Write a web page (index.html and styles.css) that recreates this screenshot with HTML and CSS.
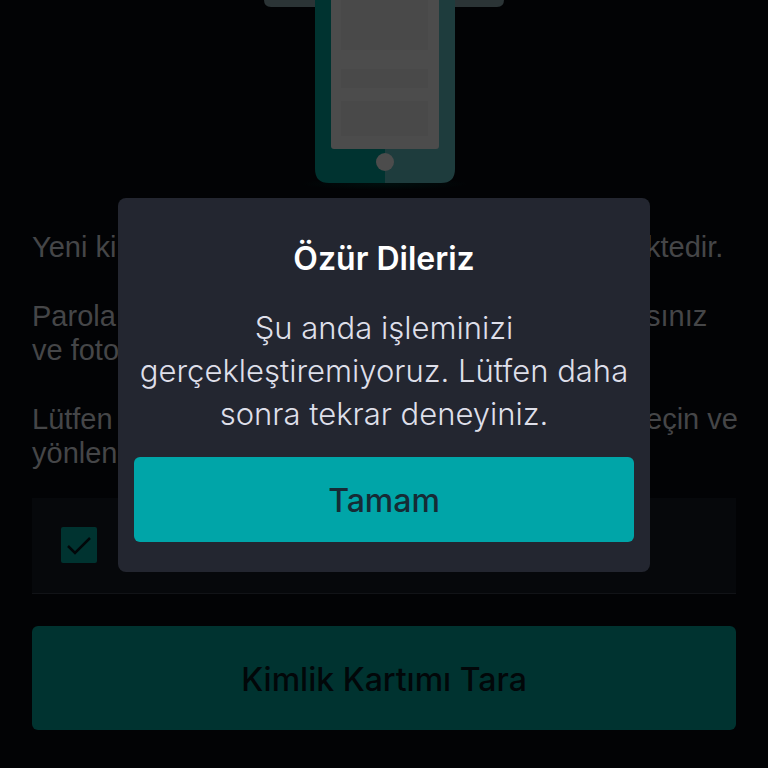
FILE: index.html
```
<!DOCTYPE html>
<html lang="tr">
<head>
<meta charset="utf-8">
<meta name="viewport" content="width=device-width, initial-scale=1">
<title>Kimlik Kartımı Tara</title>
<link rel="stylesheet" href="styles.css">
</head>
<body>
<main class="page">
  <svg class="illustration" viewBox="0 0 240 198" aria-hidden="true">
    <defs>
      <radialGradient id="shadow">
        <stop offset="0" stop-color="#000e0d"/>
        <stop offset="1" stop-color="#020305"/>
      </radialGradient>
    </defs>
    <ellipse cx="121" cy="184" rx="84" ry="6" fill="url(#shadow)"/>
    <path d="M0 0H240Q240 7 233 7H7Q0 7 0 0Z" fill="#2b3436"/>
    <path d="M51 0H121V183H65Q51 183 51 169Z" fill="#003330"/>
    <path d="M121 0H191V169Q191 183 177 183H121Z" fill="#1e3c3d"/>
    <path d="M67 0H175V146Q175 149 172 149H70Q67 149 67 146Z" fill="#4c4c4c"/>
    <path d="M77 0H164V50H77ZM77 69H164V88H77ZM77 101H164V136H77Z" fill="#494949"/>
    <circle cx="121" cy="162" r="9" fill="#4c4c4c"/>
  </svg>
  <div class="copy">
    <p class="line"><span>Yeni ki</span><span>ktedir.</span></p>
    <p class="line"><span>Parola</span><span>sınız</span><span>ve foto</span></p>
    <p class="line"><span>Lütfen</span><span>eçin ve</span><span>yönlen</span></p>
  </div>
  <div class="consent">
    <label class="check">
      <input type="checkbox" checked aria-label="Onay">
      <svg viewBox="0 0 36 36" aria-hidden="true"><path d="M7 19L14 26L29 11" fill="none" stroke="#020709" stroke-width="2.5"/></svg>
    </label>
  </div>
  <button class="button scan" type="button">Kimlik Kartımı Tara</button>
</main>
<div class="overlay">
  <section class="dialog" role="dialog" aria-modal="true" aria-labelledby="title">
    <h1 class="title" id="title">Özür Dileriz</h1>
    <p class="message">Şu anda işleminizi gerçekleştiremiyoruz. Lütfen daha sonra tekrar deneyiniz.</p>
    <button class="button confirm" type="button">Tamam</button>
  </section>
</div>
</body>
</html>
```
FILE: styles.css
```
* {
  box-sizing: border-box;
}

body {
  margin: 0;
  background: #020305;
  font-family: "Liberation Sans", sans-serif;
}

.page {
  display: flex;
  flex-direction: column;
  padding: 0 32px 38px;
}

.illustration {
  width: 240px;
  align-self: center;
}

.copy {
  display: grid;
  gap: 35px;
  margin-top: 32px;
  color: #454648;
  font-size: 29px;
  line-height: 34px;
}

.line {
  display: grid;
  grid-template-columns: 1fr 90px;
  margin: 0;
  white-space: nowrap;
}

.consent {
  display: flex;
  margin-top: 28px;
  padding: 29px;
  height: 96px;
  background: #06080b;
  border-bottom: 1px solid #111317;
}

.check {
  display: grid;
  width: 36px;
  height: 36px;
}

.check input,
.check svg {
  grid-area: 1 / 1;
  width: 36px;
  height: 36px;
  margin: 0;
}

.check input {
  appearance: none;
  background: #003330;
  border-radius: 2px;
}

.button {
  width: 100%;
  padding: 2px 0 0;
  border: 0;
  border-radius: 6px;
  font-family: Inter, sans-serif;
  font-size: 32px;
  font-weight: 500;
}

.scan {
  margin-top: 32px;
  height: 104px;
  background: #003330;
  color: #020709;
}

.overlay {
  position: fixed;
  inset: 0;
  display: grid;
  grid-template-columns: minmax(0, 532px);
  place-content: center;
  padding-top: 2px;
}

.dialog {
  padding: 41px 16px 30px;
  border-radius: 8px;
  background: #232630;
  text-align: center;
}

.title {
  margin: 0 0 27px;
  color: #fff;
  font-family: Inter, sans-serif;
  font-size: 32px;
  font-weight: 600;
  line-height: 40px;
}

.message {
  margin: 0 0 22px;
  color: #dedfe9;
  font-family: Inter, sans-serif;
  font-size: 31px;
  font-weight: 300;
  line-height: 43px;
}

.confirm {
  height: 85px;
  background: #00a5a8;
  color: #162b35;
}
```
